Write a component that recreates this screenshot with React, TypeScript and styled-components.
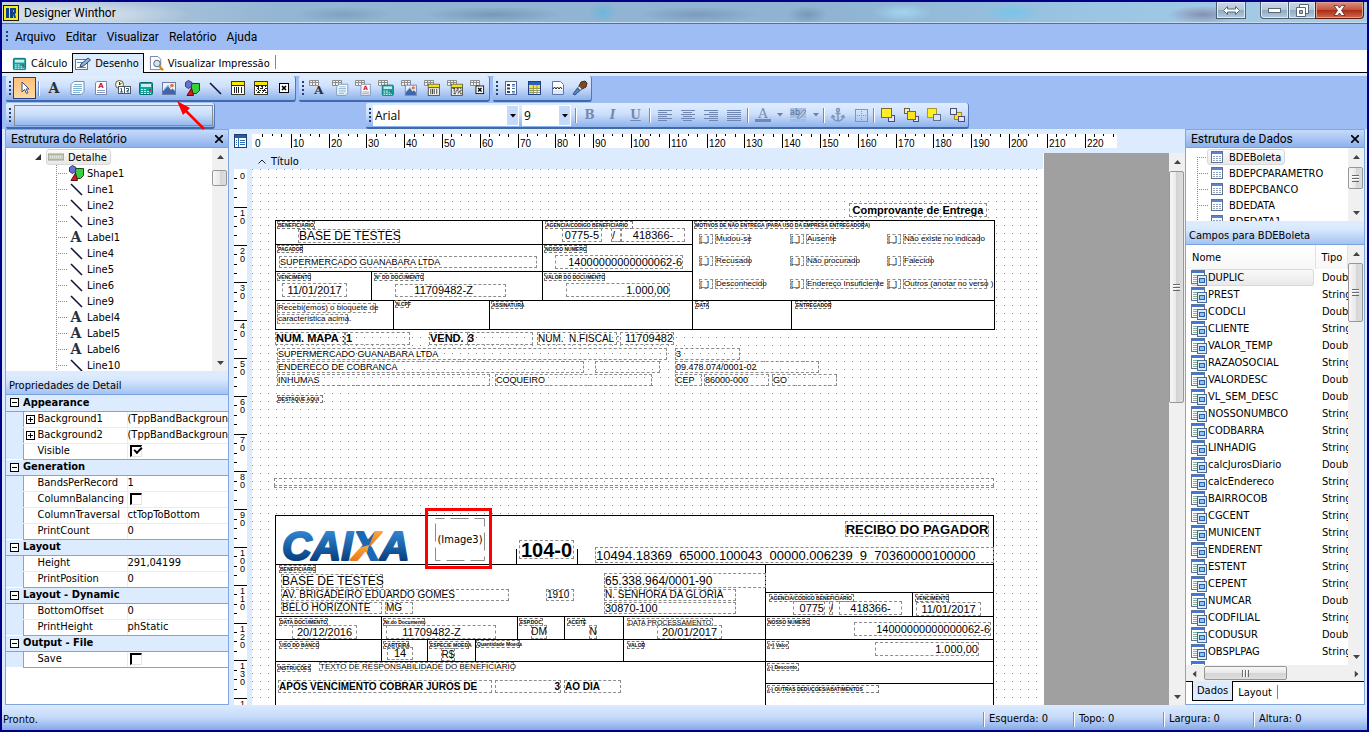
import React from 'react';
import styled, { createGlobalStyle, css } from 'styled-components';

const UI = '"DejaVu Sans Condensed", "Noto Sans", sans-serif';
const TITLE = 'Roboto, "Noto Sans", sans-serif';
const REPORT = '"Liberation Sans", Arial, sans-serif';

const GlobalStyle = createGlobalStyle`
  * { box-sizing: border-box; }
  body { margin: 0; font-family: ${UI}; font-size: 11px; color: #000; }
  button, select, input { font: inherit; color: inherit; margin: 0; padding: 0; }
  button { background: none; border: 0; }
  svg { display: block; flex: none; }
`;

/* ---------- window frame ---------- */

const Window = styled.div`
  height: 100vh;
  min-height: 480px;
  display: flex;
  flex-direction: column;
  overflow: hidden;
  border: 2px solid #000084;
  background: #dcebfe;
`;

const TitleBar = styled.header`
  flex: none;
  height: 22px;
  display: flex;
  align-items: center;
  gap: 5px;
  padding: 0 3px 0 1px;
  border-bottom: 1px solid #5d6f80;
  box-shadow: inset 0 -1px #c9dcec;
  background:
    radial-gradient(ellipse 120px 14px at 5% 60%, #dfe8f2, transparent),
    radial-gradient(ellipse 50px 8px at 25% 60%, #7fa2bf, transparent),
    radial-gradient(ellipse 70px 8px at 36% 60%, #7799b5, transparent),
    radial-gradient(ellipse 14px 10px at 44% 50%, #6fb4dc, transparent),
    radial-gradient(ellipse 60px 8px at 51% 60%, #7b9cba, transparent),
    radial-gradient(ellipse 30px 9px at 66% 50%, #a3d5ef, transparent),
    radial-gradient(ellipse 20px 9px at 59% 60%, #7699b6, transparent),
    radial-gradient(ellipse 30px 9px at 74% 50%, #78c4ea, transparent),
    radial-gradient(ellipse 36px 9px at 88% 60%, #8690b0, transparent),
    linear-gradient(90deg, #c3d2e2, #93b6d3 20%, #8fb3d1 60%, #9ac5e3 80%, #a9cde6);
  h1 { margin: 0; flex: 1; font: 12px ${TITLE}; }
`;

const WinButton = styled.button<{ $w: number; $close?: boolean }>`
  align-self: flex-start;
  width: ${p => p.$w}px;
  height: 17px;
  display: flex;
  align-items: center;
  justify-content: center;
  border: 1px solid ${p => (p.$close ? '#5b1a16' : '#4d5e6f')};
  border-top: 0;
  box-shadow: inset 0 0 0 1px ${p => (p.$close ? '#e0a090' : '#dfeaf4')};
  background: ${p => (p.$close
    ? 'linear-gradient(#d9917f, #c4513b 50%, #a92a18 50%, #cf6b45)'
    : 'linear-gradient(#c9d9e8, #b4c8da 50%, #8fa9c2 50%, #b3cce0)')};
`;

const WinGroup = styled.div`
  align-self: flex-start;
  display: flex;
  margin-left: 9px;
  button + button { margin-left: -1px; }
  button:first-child { border-bottom-left-radius: 4px; }
  button:last-child { border-bottom-right-radius: 4px; }
`;

const Grip = styled.span`
  flex: none;
  width: 3px;
  height: 15px;
  background: repeating-linear-gradient(#27416f 0 2px, transparent 2px 4px);
  clip-path: inset(0 1px 0 0);
`;

const MenuBar = styled.nav`
  flex: none;
  height: 26px;
  display: flex;
  align-items: center;
  gap: 10px;
  padding-left: 4px;
  background: #9ebdf5;
  border-bottom: 1px solid #b9b9b9;
  font: 12px ${TITLE};
  ${Grip} { margin-right: -4px; height: 12px; }
`;

const TabBar = styled.div`
  flex: none;
  height: 23px;
  display: flex;
  align-items: flex-end;
  padding-left: 5px;
  background: #fff;
  border-bottom: 1px solid #000;
`;

const ViewTab = styled.button<{ $active?: boolean }>`
  height: 19px;
  display: flex;
  align-items: center;
  gap: 4px;
  padding: 2px 5px 0;
  ${p => p.$active && css`
    height: 20px;
    margin-bottom: -1px;
    padding: 0 4px 0 2px;
    background: #dcebfe;
    border: 1px solid #000;
    border-bottom: 0;
  `}
`;

const TabEnd = styled.span`
  height: 14px;
  margin-bottom: 3px;
  border-left: 1px solid #8a8a7a;
`;

/* ---------- tool bars ---------- */

const ToolDock = styled.div`
  position: relative;
  flex: none;
  display: flex;
  flex-direction: column;
  gap: 1px;
  padding-left: 4px;
  border-top: 3px solid #dcebfe;
  background: #9ebdf5;
`;

const ToolRow = styled.div`
  display: flex;
  height: 26px;
  gap: 3px;
`;

const ToolBar = styled.div<{ $ml?: number }>`
  display: flex;
  align-items: center;
  height: 26px;
  margin-left: ${p => p.$ml || 0}px;
  padding-left: 3px;
  border-radius: 2px 3px 3px 2px;
  border-right: 1px solid #5079bd;
  border-bottom: 2px solid #4069ae;
  background: linear-gradient(#e0eefe, #cddffb 45%, #8db2ec);
`;

const ToolButton = styled.button<{ $active?: boolean; $w?: number }>`
  width: ${p => p.$w || 23}px;
  height: 22px;
  display: flex;
  align-items: center;
  justify-content: center;
  ${p => p.$active && css`
    border: 1px solid #26427c;
    background: linear-gradient(#fdc07a, #fdd9a0);
  `}
`;

const Sep = styled.span<{ $m?: number }>`
  flex: none;
  width: 2px;
  height: 15px;
  margin: 0 ${p => (p.$m === undefined ? 2 : p.$m)}px;
  background: linear-gradient(90deg, #6a8ccb 50%, #fff 50%);
`;

const EmptySlot = styled.div`
  width: 199px;
  height: 21px;
  margin: 0 1px 0 2px;
  border: 1px solid #8b8b8b;
`;

const SelectBox = styled.label<{ $w: number }>`
  position: relative;
  width: ${p => p.$w}px;
  height: 21px;
  margin-right: 3px;
  display: flex;
  border: 1px solid #fff;
  background: #fff;
  select {
    width: 100%;
    appearance: none;
    border: 0;
    outline: 0;
    padding: 0 0 0 1px;
    background: linear-gradient(90deg, transparent calc(100% - 11px), #c6dbfb 0);
    font: 12px "Open Sans", "Noto Sans", sans-serif;
  }
  svg { position: absolute; right: 2px; top: 8px; pointer-events: none; }
`;

const CalloutArrow = styled.svg`
  position: absolute;
  left: 174px;
  top: 25px;
  z-index: 3;
`;

/* ---------- docked panels ---------- */

const Main = styled.main`
  flex: 1;
  min-height: 0;
  display: grid;
  grid-template-columns: 224px minmax(0, 1fr) 180px;
  padding: 0 2px 0 3px;
`;

const Panel = styled.section`
  display: flex;
  flex-direction: column;
  min-width: 0;
  min-height: 0;
  overflow: hidden;
  border: 1px solid #7fa6e2;
`;

const PanelTitle = styled.header<{ $second?: boolean }>`
  flex: none;
  height: ${p => (p.$second ? 24 : 18)}px;
  display: flex;
  align-items: center;
  justify-content: space-between;
  padding: 0 5px 0 ${p => (p.$second ? 3 : 5)}px;
  ${p => p.$second && css`padding-top: 5px;`}
  border-bottom: 1px solid #7ba2e0;
  background: ${p => (p.$second
    ? 'linear-gradient(#dcebfe 20%, #d6e6fd 40%, #a3c3f3)'
    : 'linear-gradient(#c6dafb, #8db2ed)')};
  h2 { margin: 0; font: ${p => (p.$second ? `11px ${UI}` : `12px ${TITLE}`)}; white-space: nowrap; }
`;

const Pane = styled.div<{ $h?: number }>`
  ${p => (p.$h ? css`flex: 0 0 ${p.$h}px;` : css`flex: 1;`)}
  min-height: 0;
  display: flex;
  overflow: hidden;
  background: #fff;
`;

const TreeList = styled.ul<{ $pad: number }>`
  flex: 1;
  min-width: 0;
  margin: 0;
  padding: 1px 0 0 ${p => p.$pad}px;
  overflow: hidden;
  list-style: none;
`;

const TreeItem = styled.li`
  display: flex;
  align-items: center;
  height: 16px;
  white-space: nowrap;
`;

const Branch = styled.span<{ $first?: boolean }>`
  flex: none;
  width: 12px;
  height: 16px;
  background:
    repeating-linear-gradient(90deg, #8a8a8a 0 1px, transparent 1px 2px) 0 8px / 11px 1px no-repeat,
    repeating-linear-gradient(#8a8a8a 0 1px, transparent 1px 2px) 0 ${p => (p.$first ? 8 : 0)}px / 1px 16px no-repeat;
`;

const Node = styled.span<{ $selected?: boolean; $gap: number }>`
  display: flex;
  align-items: center;
  gap: ${p => p.$gap}px;
  height: 16px;
  ${p => p.$selected && css`
    margin-left: -2px;
    padding: 0 3px 0 1px;
    border: 1px solid #d9d9d9;
    border-radius: 3px;
    background: linear-gradient(#fafafa, #e8e8e8);
  `}
`;

const RootItem = styled(TreeItem)`
  padding-left: 29px;
  button { width: 13px; display: flex; }
`;

const ScrollTrack = styled.div<{ $row?: boolean }>`
  flex: none;
  display: flex;
  flex-direction: ${p => (p.$row ? 'row' : 'column')};
  ${p => (p.$row ? 'height: 16px;' : 'width: 16px;')}
  background: #f0f0f0;
`;

const ScrollArrow = styled.button<{ $dir: 'up' | 'down' | 'left' | 'right' }>`
  flex: none;
  width: 16px;
  height: 17px;
  display: flex;
  align-items: center;
  justify-content: center;
  svg { transform: rotate(${p => ({ up: 0, right: 90, down: 180, left: 270 })[p.$dir]}deg); }
`;

const ScrollThumb = styled.div<{ $row?: boolean; $size: number }>`
  flex: none;
  display: flex;
  align-items: center;
  justify-content: center;
  ${p => (p.$row
    ? css`width: ${p.$size}px; height: 14px; margin-top: 1px;`
    : css`height: ${p.$size}px; width: 15px;`)}
  border: 1px solid #979797;
  border-radius: 2px;
  background: linear-gradient(${p => (p.$row ? '' : '90deg, ')}#f7f7f7, #e8e8e8 50%, #d4d4d4 50%, #dedede);
  i {
    width: 7px;
    height: 7px;
    background: repeating-linear-gradient(${p => (p.$row ? '90deg, ' : '')}#6a6a6a 0 1px, #fff 1px 2px, transparent 2px 3px);
  }
`;

const Spacer = styled.span<{ $size?: number }>`
  ${p => (p.$size === undefined ? css`flex: 1;` : css`flex: 0 0 ${p.$size}px;`)}
`;

interface ScrollProps { row?: boolean; size: number; before: number; grip?: boolean }
const ArrowGlyph = () => (
  <svg width="7" height="4" viewBox="0 0 7 4"><path d="M0 4 3.500 0 7 4z" fill="#444" /></svg>
);
const ScrollBar = ({ row, size, before, grip }: ScrollProps) => (
  <ScrollTrack $row={row}>
    <ScrollArrow $dir={row ? 'left' : 'up'} aria-label={row ? 'Esquerda' : 'Acima'}><ArrowGlyph /></ScrollArrow>
    <Spacer $size={before} />
    <ScrollThumb $row={row} $size={size}>{grip && <i />}</ScrollThumb>
    <Spacer />
    <ScrollArrow $dir={row ? 'right' : 'down'} aria-label={row ? 'Direita' : 'Abaixo'}><ArrowGlyph /></ScrollArrow>
  </ScrollTrack>
);

/* ---------- property grid ---------- */

const PropTable = styled.table`
  width: 100%;
  table-layout: fixed;
  border-collapse: collapse;
  td, th { height: 16px; padding: 0; font-weight: normal; text-align: left; white-space: nowrap; overflow: hidden; line-height: 14px; }
`;

const GroupCell = styled.th`
  && { font-weight: bold; }
  background: #dcebfe;
  border-bottom: 1px solid #a0a0a0;
  span { display: flex; align-items: center; gap: 4px; padding-left: 4px; }
`;

const Gutter = styled.td`
  background: #dcebfe;
`;

const NameCell = styled.th<{ $last?: boolean; $expand?: boolean }>`
  border-left: 1px solid #a0a0a0;
  border-bottom: 1px solid ${p => (p.$last ? '#a0a0a0' : '#ececec')};
  span { display: flex; align-items: center; gap: 3px; padding-left: ${p => (p.$expand ? 2 : 14)}px; }
`;

const ValueCell = styled.td<{ $last?: boolean }>`
  border-left: 1px solid #ececec;
  border-bottom: 1px solid ${p => (p.$last ? '#a0a0a0' : '#ececec')};
`;

const Expander = styled.button<{ $open?: boolean }>`
  flex: none;
  width: 9px;
  height: 9px;
  border: 1px solid #000;
  background:
    linear-gradient(#000, #000) center / 5px 1px no-repeat,
    linear-gradient(#000, #000) center / ${p => (p.$open ? 0 : 1)}px 5px no-repeat,
    #fff;
`;

const Check = styled.input`
  && { display: block; margin-left: 2px; }
  position: relative;
  appearance: none;
  width: 12px;
  height: 12px;
  border: 2px solid #000;
  border-right: 1px solid #e4e4e4;
  border-bottom: 1px solid #e4e4e4;
  &:checked::after {
    content: '';
    position: absolute;
    left: 2px;
    top: 0;
    width: 6px;
    height: 3px;
    border-left: 2px solid #000;
    border-bottom: 2px solid #000;
    transform: rotate(-45deg);
  }
`;

/* ---------- design surface ---------- */

const Designer = styled.section`
  display: flex;
  flex-direction: column;
  min-width: 0;
  min-height: 0;
  overflow: hidden;
`;

const RulerRow = styled.div`
  flex: none;
  display: flex;
  gap: 5px;
  padding: 5px 0 5px 5px;
`;

const Surface = styled.div`
  flex: 1;
  min-height: 0;
  display: flex;
  overflow: hidden;
`;

const SideRuler = styled.div`
  flex: none;
  width: 23px;
  padding: 16px 0 0 5px;
  overflow: hidden;
`;

const Paper = styled.div`
  flex: none;
  width: 792px;
  display: flex;
  flex-direction: column;
  overflow: hidden;
  border-right: 1px solid #fff;
`;

const BandTitle = styled.div`
  flex: none;
  height: 16px;
  display: flex;
  align-items: center;
  gap: 5px;
  padding-left: 6px;
`;

const Backdrop = styled.div`
  flex: 1;
  min-width: 0;
  background: #a0a0a0;
`;

const Canvas = styled.div`
  position: relative;
  flex: 1;
  overflow: hidden;
  font-family: ${REPORT};
  background: conic-gradient(at 1px 1px, transparent 75%, #858585 0) 0 0 / 8px 8px, #fff;
`;

interface BoxProps { $x: number; $y: number; $w: number; $h: number }
const place = css<BoxProps>`
  position: absolute;
  left: ${p => p.$x}px;
  top: ${p => p.$y}px;
  width: ${p => p.$w}px;
  height: ${p => p.$h}px;
`;

const ShapeBox = styled.div<BoxProps>`
  ${place}
  border: 1px solid #000;
  background: #fff;
`;

const Rule = styled.div<BoxProps>`
  ${place}
  background: #000;
`;

const FieldBox = styled.div<BoxProps & { $size: number; $bold?: boolean; $align?: string }>`
  ${place}
  display: flex;
  align-items: center;
  justify-content: ${p => ({ r: 'flex-end', c: 'center' })[p.$align || ''] || 'flex-start'};
  border: 1px dashed #8c8c8c;
  font-size: ${p => p.$size}px;
  font-weight: ${p => (p.$bold ? 'bold' : 'normal')};
  line-height: 1;
  white-space: pre;
`;

const Caption = styled(FieldBox)`
  border-color: #777;
`;

const Highlight = styled.div<BoxProps>`
  ${place}
  border: 3px solid #f00;
`;

const ImageSlot = styled.div<BoxProps>`
  ${place}
  display: grid;
  place-items: center;
  font-family: ${UI};
  font-size: 11px;
  > * { grid-area: 1 / 1; }
`;

const Logo = styled.svg<BoxProps>`
  ${place}
  overflow: visible;
`;

type Quad = [number, number, number, number];
const shapes: Quad[] = [[23, 51, 720, 110], [23, 346, 719, 400]];

const rules: Quad[] = [
  [23, 75, 418, 1], [23, 102, 418, 1], [23, 131, 720, 1],
  [290, 51, 1, 81], [440, 51, 1, 110], [119, 102, 1, 30],
  [141, 131, 1, 30], [237, 131, 1, 30], [539, 131, 1, 30],
  [23, 395, 719, 1], [23, 447, 719, 1], [23, 470, 719, 1], [23, 492, 719, 1],
  [513, 423, 229, 1], [513, 514, 229, 1],
  [513, 395, 1, 300], [660, 423, 1, 25], [371, 447, 1, 46], [129, 447, 1, 46],
  [265, 447, 1, 24], [312, 447, 1, 24], [175, 470, 1, 23], [223, 470, 1, 23],
  [264, 380, 1, 15], [325, 380, 1, 15],
];

type Field = [x: number, y: number, w: number, h: number, text: string, size?: number, align?: '' | 'r' | 'c', bold?: boolean];

const captions: [number, number, number, string][] = [
  [25, 52, 38, 'BENEFICIARIO'], [25, 76, 26, 'PAGADOR'], [25, 104, 34, 'VENCIMENTO'],
  [122, 104, 50, 'N° DO DOCUMENTO'], [143, 131, 14, 'N.CPF'], [239, 132, 32, 'ASSINATURA'],
  [293, 52, 88, 'AGENCIA/CODIGO BENEFICIARIO'], [292, 76, 43, 'NOSSO NUMERO'], [292, 104, 61, 'VALOR DO DOCUMENTO'],
  [442, 52, 170, 'MOTIVOS DE NÃO ENTREGA (PARA USO DA EMPRESA ENTREGADORA)'],
  [443, 132, 14, 'DATA'], [543, 132, 36, 'ENTREGADOR'], [25, 226, 46, 'DESTAQUE AQUI'],
  [27, 396, 37, 'BENEFICIARIO'], [517, 425, 85, 'AGENCIA/CODIGO BENEFICIARIO'], [663, 425, 34, 'VENCIMENTO'],
  [27, 449, 49, 'DATA DOCUMENTO'], [131, 449, 42, 'Nr.do Documento'], [267, 449, 24, 'ESP.DOC'],
  [315, 449, 18, 'ACEITE'], [515, 449, 43, 'NOSSO NUMERO'], [27, 472, 40, 'USO DO BANCO'],
  [131, 472, 26, 'CARTEIRA'], [177, 472, 40, 'ESPECIE MOEDA'], [224, 471, 44, 'Quantidade Moeda'],
  [375, 472, 17, 'VALOR'], [515, 472, 22, '(=) Valor'], [515, 494, 32, '(-) Desconto'],
  [515, 516, 112, '(-) OUTRAS DEDUÇOES/ABATIMENTOS'], [25, 495, 34, 'INSTRUÇÕES'],
];

const fields: Field[] = [
  [597, 34, 138, 14, 'Comprovante de Entrega', 11, 'c', true],
  [46, 60, 102, 14, 'BASE DE TESTES', 12],
  [27, 87, 258, 12, 'SUPERMERCADO GUANABARA LTDA', 9],
  [30, 114, 65, 14, '11/01/2017', 11, 'c'],
  [143, 115, 111, 13, '      11709482-Z', 11],
  [25, 134, 99, 10, 'Recebi(emos) o bloquete de', 8],
  [25, 145, 71, 10, 'característica acima.', 8],
  [310, 59, 40, 14, '0775-5', 11, 'c'],
  [359, 59, 10, 14, '/', 11],
  [369, 59, 64, 14, '418366-', 11, 'c'],
  [303, 86, 128, 14, '14000000000000062-6', 11, 'r'],
  [314, 114, 104, 14, '1.000,00', 11, 'r'],
  [447, 65, 14, 10, '[_]', 8], [463, 65, 35, 10, 'Mudou-se', 8],
  [447, 87, 14, 10, '[_]', 8], [463, 87, 35, 10, 'Recusado', 8],
  [447, 110, 14, 10, '[_]', 8], [463, 110, 49, 10, 'Desconhecido', 8],
  [538, 65, 14, 10, '[_]', 8], [554, 65, 28, 10, 'Ausente', 8],
  [538, 87, 14, 10, '[_]', 8], [554, 87, 51, 10, 'Não procurado', 8],
  [538, 110, 14, 10, '[_]', 8], [554, 110, 72, 10, 'Endereço Insuficiente', 8],
  [635, 65, 14, 10, '[_]', 8], [651, 65, 77, 10, 'Não existe no indicado', 8],
  [635, 87, 14, 10, '[_]', 8], [651, 87, 29, 10, 'Falecido', 8],
  [635, 110, 14, 10, '[_]', 8], [651, 110, 84, 10, 'Outros (anotar no verso )', 8],
  [23, 163, 70, 13, 'NUM. MAPA :', 11, '', true], [93, 163, 65, 13, '1', 11, '', true],
  [177, 163, 39, 13, 'VEND. :', 11, '', true], [215, 163, 66, 13, '3', 11, '', true],
  [285, 163, 80, 13, 'NUM.  N.FISCAL :', 10], [368, 163, 54, 13, '11709482', 11, 'r'],
  [25, 179, 390, 12, 'SUPERMERCADO GUANABARA LTDA', 9], [423, 179, 65, 12, '3', 9],
  [25, 192, 307, 12, 'ENDERECO DE COBRANCA', 9], [343, 192, 65, 12, '', 9], [423, 192, 144, 12, '09.478.074/0001-02', 9],
  [25, 205, 213, 12, 'INHUMAS', 9], [243, 205, 157, 12, 'COQUEIRO', 9],
  [423, 205, 27, 12, 'CEP', 9], [452, 205, 65, 12, '86000-000', 9], [520, 205, 65, 12, 'GO', 9],
  [22, 309, 720, 8, '', 9], [22, 316, 720, 3, '', 9],
  [593, 352, 144, 16, 'RECIBO DO PAGADOR', 13, 'c', true],
  [267, 371, 55, 19, '104-0', 20, 'c', true],
  [343, 378, 399, 16, '10494.18369  65000.100043  00000.006239  9  70360000100000', 13],
  [29, 405, 102, 14, 'BASE DE TESTES', 12],
  [29, 420, 228, 12, 'AV. BRIGADEIRO EDUARDO GOMES', 10], [294, 420, 28, 12, '1910', 10],
  [29, 433, 101, 12, 'BELO HORIZONTE', 10], [133, 433, 28, 12, 'MG', 10],
  [352, 404, 162, 15, '65.338.964/0001-90', 12],
  [352, 420, 132, 12, 'N. SENHORA DA GLORIA', 10], [352, 433, 132, 12, '30870-100', 11],
  [541, 432, 32, 14, '0775', 11, 'r'], [577, 432, 4, 14, '/', 11], [587, 432, 63, 14, '418366-', 11, 'c'],
  [664, 433, 65, 14, '11/01/2017', 11, 'c'],
  [40, 456, 65, 14, '20/12/2016', 11, 'c'], [134, 456, 110, 14, '     11709482-Z', 11],
  [279, 456, 16, 14, 'DM', 10, 'c'], [337, 456, 8, 14, 'N', 10, 'c'],
  [375, 449, 86, 8, 'DATA PROCESSAMENTO', 7],
  [405, 456, 65, 14, '20/01/2017', 11, 'c'],
  [602, 453, 137, 14, '14000000000000062-6', 11, 'r'],
  [135, 478, 26, 13, '14', 11, 'c'], [189, 479, 14, 13, 'R$', 10, 'c'],
  [623, 473, 104, 14, '1.000,00', 11, 'r'],
  [67, 493, 195, 9, 'TEXTO DE RESPONSABILIDADE DO BENEFICIARIO', 8],
  [26, 511, 214, 13, 'APÓS VENCIMENTO COBRAR JUROS DE', 10, '', true],
  [243, 511, 66, 13, '3', 10, 'r', true], [312, 511, 57, 13, 'AO DIA', 10, '', true],
];

const MM10 = 37.8;
const marks = (n: number) => Array.from({ length: n }, (_, i) => i);

const TopRuler = () => (
  <svg width="865" height="14" shapeRendering="crispEdges">
    <rect width="865" height="14" fill="#fff" />
    {marks(92).map(i => {
      const x = Math.round(i * MM10 / 4) + 1;
      const long = i % 4 === 0;
      return i > 0 && <rect key={i} x={x} y={0} width="1" height={long ? 14 : i % 2 ? 3 : 2} fill="#000" />;
    })}
    <rect x="327" width="1" height="13" />
    {marks(23).map(i => (
      <text key={i} x={Math.round(i * MM10) + 3} y="13" fontFamily={REPORT} fontSize="10">{i * 10}</text>
    ))}
  </svg>
);

const LeftRuler = () => (
  <svg width="13" height="536" shapeRendering="crispEdges">
    <rect width="13" height="536" fill="#fff" />
    {marks(57).map(i => i > 0 && (
      <rect key={i} x="0" y={Math.round(i * MM10 / 4)} width={i % 4 ? 3 : 13} height="1" />
    ))}
    {marks(15).map(i => String(i * 10).split('').map((d, k) => (
      <text key={`${i}-${k}`} x="6" y={Math.round(i * MM10) + (i ? 9 : 10) + k * 8} fontFamily={REPORT} fontSize="9">{d}</text>
    )))}
  </svg>
);

/* ---------- data list ---------- */

const FieldTable = styled.table`
  width: 100%;
  table-layout: fixed;
  border-collapse: collapse;
  th { height: 24px; padding: 0 6px; text-align: left; font-weight: normal; border-right: 1px solid #e2e2e2; background: linear-gradient(#fff, #f7f7f8); }
  td { height: 17px; padding: 0 0 0 7px; white-space: nowrap; overflow: hidden; }
  td:first-child { padding: 0 1px 0 5px; }
`;

const NameChip = styled.span<{ $selected?: boolean }>`
  display: flex;
  align-items: center;
  height: 17px;
  gap: 1px;
  border-radius: 3px;
  ${p => p.$selected && css`
    box-shadow: inset 0 0 0 1px #d9d9d9;
    background: linear-gradient(#fafafa, #e8e8e8);
  `}
`;

const ListArea = styled.div`
  flex: 1;
  min-width: 0;
  overflow: hidden;
`;

const BottomTabs = styled.div`
  flex: none;
  height: 23px;
  display: flex;
  align-items: flex-start;
  padding-left: 6px;
  border-top: 1px solid #000;
  background: #fff;
  ${TabEnd} { margin-top: 3px; }
`;

const BottomTab = styled.button<{ $active?: boolean }>`
  height: 20px;
  padding: 0 5px;
  ${p => p.$active && css`
    margin-top: -1px;
    padding: 0 4px;
    border: 1px solid #000;
    border-top: 0;
    background: #dcebfe;
  `}
`;

const StatusBar = styled.footer`
  flex: none;
  height: 25px;
  display: flex;
  align-items: center;
  padding: 4px 0 0 1px;
  background: linear-gradient(#dcebfe, #c4d9fa 50%, #84a9e6);
`;

const StatusCell = styled.span<{ $w: number }>`
  width: ${p => p.$w}px;
  height: 15px;
  padding-left: 5px;
  border-left: 1px solid #6f93d6;
  box-shadow: inset 1px 0 #fff;
`;

/* ---------- icons (16 x 16) ---------- */

type IconName = 'cursor' | 'label' | 'memo' | 'rich' | 'sysvar' | 'calc' | 'image' | 'shape' | 'line'
  | 'bar' | 'bar2' | 'check' | 'tree' | 'data' | 'page' | 'brush' | 'pen' | 'preview' | 'band' | 'table'
  | 'field' | 'front' | 'back' | 'forward' | 'backward' | 'anchor' | 'border' | 'fontcolor' | 'hilite';

const glyphs: Record<IconName, React.ReactNode> = {
  cursor: <path d="M5 2v10l2.500-2.500 2 4 1.500-.8-2-3.700H12z" fill="#fff" stroke="#39507a" />,
  label: <text x="8" y="13" textAnchor="middle" fontFamily="DejaVu Serif, serif" fontWeight="bold" fontSize="14" fill="#2e3038">A</text>,
  memo: <><path d="M5 1.500h10v10l-3 3H2v-10z" fill="#fff" stroke="#6c8fb5" /><path d="M5 4.500h8M4 6.500h9M4 8.500h9M4 10.500h9M4 12.500h7" stroke="#7fb3d8" /></>,
  rich: <><path d="M5 1.500h9.500v13h-11V3z" fill="#fff" stroke="#7c86ae" /><text x="9" y="8" textAnchor="middle" fontFamily="DejaVu Sans" fontWeight="bold" fontSize="7" fill="#d01010">A</text><path d="M5 10.500h8M5 12.500h8" stroke="#8a9bc4" /></>,
  sysvar: <><circle cx="4.500" cy="4.500" r="4" fill="#fff8d0" stroke="#555" /><path d="M4.500 2v3l2-2" fill="none" stroke="#333" /><rect x="3.500" y="6.500" width="6" height="7" fill="#fff" stroke="#555" /><rect x="9.500" y="6.500" width="6" height="7" fill="#fff" stroke="#555" /><path d="M5.500 8.500h1v3.500M5 12h3M11 8.500h2.500v2H12V12h2" fill="none" stroke="#1c5f95" /></>,
  calc: <><rect x="1.500" y="2.500" width="13" height="12" rx="1" fill="#12a5a0" stroke="#0a6b6b" /><rect x="3" y="4" width="10" height="3" fill="#c7f1ee" /><path d="M3 9.500h2M6 9.500h2M3 11.500h2M6 11.500h2M9 11.500h2M3 13.500h2M6 13.500h2M9 13.500h2M12 13.500h1" stroke="#d8ffff" /><rect x="11" y="9" width="2" height="2" fill="#e02020" /></>,
  image: <><rect x="1.500" y="2.500" width="13" height="12" fill="#eaf2fc" stroke="#6a7aa8" /><circle cx="11" cy="5.500" r="1.800" fill="#ef6d3a" /><path d="M2 14v-3l5-5 3 4 1.500-1.500L14 11v3z" fill="#3f66ac" /><path d="m3 9 4-4 3 3" fill="none" stroke="#a9bedf" /></>,
  shape: <><path d="M7.500 3.500h8v7l-3 3h-5z" fill="#35d13a" stroke="#1c4a1e" /><path d="m4.500.500 3.500 2-.5 4-3 2-3-2V2.500z" fill="#6b6fd0" stroke="#35357a" /><path d="m7.500 8 2 7.500H3z" fill="#e0161c" stroke="#5c1010" /></>,
  line: <path d="m3 3 11 11" stroke="#15153c" strokeWidth="1.600" />,
  bar: <><rect x="1.500" y="1.500" width="13" height="13" fill="#fff" stroke="#3a3a2a" /><rect x="2" y="2" width="12" height="3" fill="#f6e900" /><path d="M2 5.500h12M4.500 7v6M6.500 7v6M8.500 7v6M11.500 7v6" stroke="#222" /></>,
  bar2: <><rect x="1.500" y="1.500" width="13" height="13" fill="#fff" stroke="#3a3a2a" /><rect x="2" y="2" width="12" height="3" fill="#f6e900" /><path d="M2 5.500h12M3 6.500h3m2 0h2m2 0h1M4 8.500h2m1 0h3m2 0h2M3 10.500h1m2 0h2m1 0h4M4 12.500h3m2 0h1m2 0h2M5 7.500h1m3 0h1M5 11.500h1m4 0h1M5 9.500h1m5 0h1" stroke="#222" /></>,
  check: <><rect x="3.500" y="3.500" width="9" height="9" fill="#fff" stroke="#000" /><path d="m6 6 4 4m0-4-4 4" stroke="#000" strokeWidth="1.600" /></>,
  tree: <><rect x="2.500" y="1.500" width="11" height="13" fill="#fff" stroke="#48659c" /><path d="M4 4h3v2H4zM4 7.500h3v2H4zM4 11h3v2H4z" fill="#26457c" /><path d="M9 4.500h3M9 6h3M9 8.500h3M9 11.500h3M9 13h3" stroke="#4a6da8" /></>,
  data: <><rect x="2.500" y="1.500" width="12" height="13" fill="#fff" stroke="#1d3f86" /><rect x="3" y="2" width="11" height="3" fill="#2a62b8" /><rect x="3" y="5" width="4" height="9" fill="#f6e52a" /><rect x="7" y="5" width="7" height="3" fill="#f6e52a" /><path d="M3 8.500h11M3 10.500h11M3 12.500h11M7.500 5v9M11 5v9" stroke="#9a9a60" /></>,
  page: <><path d="M3.500 1.500h8l3 3v10h-11z" fill="#fff" stroke="#5c76b0" /><path d="m4 9 1.500-2L7 9l1.500-2L10 9l1.500-2L13 9" fill="none" stroke="#222" /><path d="M4 10h10v4H4z" fill="#dfe9f8" /></>,
  brush: <><path d="M9 2l4-1 2 2-1 4-4 2-3-3z" fill="#7b4a2b" stroke="#4c2a16" /><path d="m7 6 3 3-2 1.500L5.500 8z" fill="#e8ecee" stroke="#667" /><path d="m5.500 8 2.500 2.500L3 15l-2-1z" fill="#4f86c2" stroke="#2d5587" /></>,
  pen: <><rect x=".500" y="3.500" width="12" height="10" fill="#fff" stroke="#5876ae" /><path d="M2 6.500h6M2 11.500h9" stroke="#5b8cd0" /><path d="m5 11 1-3 7-6 2.500 2-7 6z" fill="#86b4e4" stroke="#32455e" /></>,
  preview: <><path d="M1.500.500h8l3 3v11h-11z" fill="#fff" stroke="#6d7fa8" /><circle cx="8.500" cy="8" r="3.500" fill="#cfe4f4" stroke="#555f6a" /><path d="m11 11 4 4" stroke="#d48a2c" strokeWidth="2.500" /></>,
  band: <><rect x="0" y="5" width="16" height="6" fill="#c9cdbd" stroke="#85897a" strokeWidth=".8" /><path d="M2 8h12" stroke="#fff" strokeDasharray="1 1" /></>,
  table: <><rect x="2.500" y="2.500" width="11" height="11" fill="#fff" stroke="#5f7294" /><rect x="3" y="3" width="10" height="2" fill="#5a84dc" /><path d="M4 7.500h8M4 9.500h8M4 11.500h8" stroke="#8fa3c0" strokeDasharray="2 1" /></>,
  field: <><rect x=".500" y=".500" width="13" height="13" fill="#fff" stroke="#5c7296" /><rect x="1" y="1" width="12" height="2" fill="#3f78d6" /><path d="M2 5.500h4M2 7.500h4M2 9.500h4M2 11.500h4" stroke="#86b09a" /><rect x="6.500" y="5.500" width="9" height="10" fill="#dcebfb" stroke="#49699a" /><rect x="8.500" y="8.500" width="5" height="4" fill="#8fc1f2" stroke="#2b5ea8" /></>,
  front: <><rect x="8.500" y="8.500" width="6" height="6" fill="#dce6f5" stroke="#4b4b7c" /><rect x="1.500" y="1.500" width="10" height="9" fill="#ffee20" stroke="#7d6a1a" /></>,
  back: <><rect x="1.500" y="1.500" width="5" height="5" fill="#f3ecc0" stroke="#6b5c3a" /><rect x="10.500" y="9.500" width="5" height="5" fill="#dce6f5" stroke="#4b4b7c" /><rect x="4.500" y="4.500" width="8" height="8" fill="#ffe31c" stroke="#7d6a1a" /></>,
  forward: <><rect x="1.500" y="1.500" width="9" height="9" fill="#ffee20" stroke="#a89a30" /><rect x="7.500" y="7.500" width="7" height="6" fill="#d7e4f5" stroke="#5f6f94" /></>,
  backward: <><rect x="5.500" y="5.500" width="7" height="7" fill="#ffe31c" stroke="#a08a20" /><rect x="1.500" y="1.500" width="6" height="6" fill="#e6eefa" stroke="#4c4c74" /><rect x="9.500" y="9.500" width="6" height="5" fill="#dce6f5" stroke="#4c4c74" /></>,
  anchor: <g fill="none" stroke="#7f95bd" strokeWidth="1.500"><circle cx="8" cy="3" r="1.500" /><path d="M8 4.500V14M5.500 6.500h5M2.500 9c.5 3 2.500 5 5.500 5s5-2 5.500-5M1.500 11l1-2.500L5 10m6 0 2.500-1.500 1 2.500" /></g>,
  border: <><rect x="2.500" y="2.500" width="12" height="12" fill="none" stroke="#7f95bd" /><path d="M8.500 4v9M4 8.500h9" stroke="#7f95bd" strokeDasharray="1 1" /></>,
  fontcolor: <><text x="8" y="11" textAnchor="middle" fontFamily="DejaVu Serif, serif" fontSize="13" fill="#7489b0">A</text><rect x="0" y="12" width="16" height="3" fill="#7489b0" /></>,
  hilite: <><rect x="0" y="1" width="16" height="10" fill="#a9bddf" /><rect x="0" y="12" width="16" height="3" fill="#9fbcec" /><text x="0" y="8" fontFamily="DejaVu Sans" fontSize="8" fill="#5a6f96">ab</text><path d="m7 11 7-8 2 1-6 7z" fill="#c3d2ea" stroke="#7489b0" /></>,
};

const Icon = ({ name, size = 16 }: { name: IconName; size?: number }) => (
  <svg width={size} height={size} viewBox="0 0 16 16">{glyphs[name]}</svg>
);

/* data-aware component: a small table behind the plain component's icon */
const DbIcon = ({ name }: { name: IconName }) => (
  <svg width="18" height="18" viewBox="0 0 18 18">
    <path d="M1.500 1.500h9v5h-9zM1.500 3.500h9M4.500 1.500v5M7.500 1.500v5" fill="#f4f4ee" stroke="#8d8d8d" />
    <g transform="translate(4 4) scale(.85)">{glyphs[name]}</g>
  </svg>
);

const Close = () => (
  <svg width="8" height="8" viewBox="0 0 8 8"><path d="m0 0 8 8m0-8-8 8" stroke="#000" strokeWidth="1.700" /></svg>
);
const Drop = ({ fill = '#000' }: { fill?: string }) => (
  <svg width="6" height="4" viewBox="0 0 6 4"><path d="M0 0h6L3 3.500z" fill={fill} /></svg>
);

const Lines = ({ kind }: { kind: 'l' | 'c' | 'r' | 'j' }) => (
  <svg width="14" height="13" viewBox="0 0 14 13" shapeRendering="crispEdges">
    {[0, 1, 2, 3, 4, 5].map(i => {
      const w = kind === 'j' || i % 2 === 0 ? 14 : 9;
      const x = kind === 'c' ? Math.floor((14 - w) / 2) : kind === 'r' ? 14 - w : 0;
      return <rect key={i} x={x} y={1 + i * 2} width={w} height="1" fill="#6f86b0" />;
    })}
  </svg>
);

const Letter = styled.span<{ $kind: 'b' | 'i' | 'u' }>`
  font: bold 12px "DejaVu Serif", serif;
  color: #7389b2;
  font-style: ${p => (p.$kind === 'i' ? 'italic' : 'normal')};
  text-decoration: ${p => (p.$kind === 'u' ? 'underline' : 'none')};
`;

/* ---------- content ---------- */

const treeNodes = ['Shape1', 'Line1', 'Line2', 'Line3', 'Label1', 'Line4', 'Line5', 'Line6', 'Line9', 'Label4', 'Label5', 'Label6', 'Line10'];
const nodeIcon = (n: string): IconName => (n.startsWith('Shape') ? 'shape' : n.startsWith('Line') ? 'line' : 'label');

type Prop = [name: string, value: string | boolean, expand?: boolean];
const groups: [string, Prop[]][] = [
  ['Appearance', [['Background1', '(TppBandBackground)', true], ['Background2', '(TppBandBackground)', true], ['Visible', true]]],
  ['Generation', [['BandsPerRecord', '1'], ['ColumnBalancing', false], ['ColumnTraversal', 'ctTopToBottom'], ['PrintCount', '0']]],
  ['Layout', [['Height', '291,04199'], ['PrintPosition', '0']]],
  ['Layout - Dynamic', [['BottomOffset', '0'], ['PrintHeight', 'phStatic']]],
  ['Output - File', [['Save', false]]],
];

const dataSets = ['BDEBoleta', 'BDEPCPARAMETRO', 'BDEPCBANCO', 'BDEDATA', 'BDEDATA1'];
const dbFields: [string, string][] = [
  ['DUPLIC', 'Double'], ['PREST', 'String'], ['CODCLI', 'Double'], ['CLIENTE', 'String'], ['VALOR_TEMP', 'Double'],
  ['RAZAOSOCIAL', 'String'], ['VALORDESC', 'Double'], ['VL_SEM_DESC', 'Double'], ['NOSSONUMBCO', 'String'],
  ['CODBARRA', 'String'], ['LINHADIG', 'String'], ['calcJurosDiario', 'Double'], ['calcEndereco', 'String'],
  ['BAIRROCOB', 'String'], ['CGCENT', 'String'], ['MUNICENT', 'String'], ['ENDERENT', 'String'], ['ESTENT', 'String'],
  ['CEPENT', 'String'], ['NUMCAR', 'Double'], ['CODFILIAL', 'String'], ['CODUSUR', 'Double'], ['OBSPLPAG', 'String'], ['', ''],
];

const tools: IconName[] = ['label', 'memo', 'rich', 'sysvar', 'calc', 'image', 'shape', 'line', 'bar', 'bar2', 'check'];
const dbTools: IconName[] = ['label', 'memo', 'rich', 'calc', 'image', 'bar', 'bar2', 'check'];
const viewTools: IconName[] = ['tree', 'data', 'page', 'brush'];

const Report = () => (
  <Canvas>
    {shapes.map(([x, y, w, h]) => <ShapeBox key={y} $x={x} $y={y} $w={w} $h={h} />)}
    {rules.map(([x, y, w, h], i) => <Rule key={i} $x={x} $y={y} $w={w} $h={h} />)}
    {captions.map(([x, y, w, text], i) => (
      <Caption key={i} $x={x} $y={y} $w={w} $h={8} $size={5} $bold>{text}</Caption>
    ))}
    {fields.map(([x, y, w, h, text, size = 11, align, bold], i) => (
      <FieldBox key={i} $x={x} $y={y} $w={w} $h={h} $size={size} $align={align} $bold={bold}>{text}</FieldBox>
    ))}
    <Logo $x={30} $y={362} $w={130} $h={31} viewBox="0 0 130 31">
      <defs>
        <linearGradient id="caixaBlue" x1="0" y1="0" x2="0" y2="31" gradientUnits="userSpaceOnUse">
          <stop offset="0" stopColor="#2f86d0" /><stop offset="1" stopColor="#063c7c" />
        </linearGradient>
        <linearGradient id="caixaOrange" x1="0" y1="0" x2="0" y2="1">
          <stop offset="0" stopColor="#f9a83a" /><stop offset="1" stopColor="#e9731c" />
        </linearGradient>
        <pattern id="caixaCross" width="160" height="60" patternUnits="userSpaceOnUse">
          <rect width="160" height="60" fill="#1a67b4" />
          <path d="M87 15 93 0h30v8L92 16z" fill="url(#caixaOrange)" />
          <path d="m87 14-4 17H55v-8z" fill="url(#caixaOrange)" />
        </pattern>
      </defs>
      <text y="29" fontFamily={REPORT} fontSize="41" fontWeight="bold" fontStyle="italic" fill="url(#caixaBlue)" stroke="url(#caixaBlue)" strokeWidth="2" strokeLinejoin="round">
        CAI<tspan fill="url(#caixaCross)" stroke="url(#caixaCross)">X</tspan>A
      </text>
    </Logo>
    <ImageSlot $x={183} $y={349} $w={50} $h={43}>
      <svg width="50" height="43"><rect x=".5" y=".5" width="49" height="42" fill="#fff" stroke="#8c8c8c" strokeDasharray="18 6" strokeDashoffset="9" /></svg>
      <span>(Image3)</span>
    </ImageSlot>
    <Highlight $x={173} $y={339} $w={67} $h={61} />
  </Canvas>
);

const App = () => (
  <Window>
    <GlobalStyle />
    <TitleBar>
      <svg width="16" height="16" viewBox="0 0 16 16">
        <rect width="16" height="16" fill="#1a1a10" /><rect x="1" y="1" width="14" height="14" fill="#f5ee1c" />
        <path d="M3 3h3v10H3zM7 3h6v5l-1 1 1 4h-2l-1-4v4H7z" fill="#10408c" />
        <path d="M10 5h1v2h-1z" fill="#5fd0e8" />
      </svg>
      <h1>Designer Winthor</h1>
      <WinButton $w={30} aria-label="Mover">
        <svg width="17" height="9" viewBox="0 0 17 9"><path d="m.500 4.500 4-4v2.500h8V.500l4 4-4 4V6h-8v2.500z" fill="#fff" stroke="#5a6876" /></svg>
      </WinButton>
      <WinGroup>
        <WinButton $w={29} aria-label="Minimizar">
          <svg width="13" height="5"><rect x=".5" y=".5" width="12" height="4" fill="#fff" stroke="#5a6876" /></svg>
        </WinButton>
        <WinButton $w={28} aria-label="Restaurar">
          <svg width="13" height="13"><path d="M3.500.500h9v9h-9z" fill="#fff" stroke="#5a6876" /><path d="M.500 3.500h9v9h-9z" fill="#fff" stroke="#5a6876" /><path d="M3.500 6.500h3v3h-3z" fill="#9db5cc" stroke="#5a6876" /></svg>
        </WinButton>
        <WinButton $w={49} $close aria-label="Fechar">
          <svg width="13" height="11" viewBox="0 0 13 11"><path d="M1 .500h3.500l2 2.500 2-2.500H12L8.500 5.500 12 10.500H8.500l-2-2.500-2 2.500H1l3.500-5z" fill="#fff" stroke="#5b2a28" strokeWidth=".8" /></svg>
        </WinButton>
      </WinGroup>
    </TitleBar>

    <MenuBar>
      <Grip />
      {['Arquivo', 'Editar', 'Visualizar', 'Relatório', 'Ajuda'].map(m => <button key={m}>{m}</button>)}
    </MenuBar>

    <TabBar>
      <ViewTab><Icon name="calc" size={15} />Cálculo</ViewTab>
      <ViewTab $active><Icon name="pen" />Desenho</ViewTab>
      <ViewTab><Icon name="preview" size={15} />Visualizar Impressão</ViewTab>
      <TabEnd />
    </TabBar>

    <ToolDock>
      <ToolRow>
        <ToolBar>
          <Grip />
          <Spacer $size={1} />
          <ToolButton $active aria-label="Selecionar"><Icon name="cursor" /></ToolButton>
          <Sep />
          {tools.map(t => <ToolButton key={t} aria-label={t}><Icon name={t} /></ToolButton>)}
        </ToolBar>
        <ToolBar>
          <Grip />
          {dbTools.map(t => <ToolButton key={t} aria-label={`db ${t}`}><DbIcon name={t} /></ToolButton>)}
        </ToolBar>
        <ToolBar>
          <Grip />
          {viewTools.map(t => <ToolButton key={t} aria-label={t}><Icon name={t} /></ToolButton>)}
        </ToolBar>
      </ToolRow>
      <ToolRow>
        <ToolBar><Grip /><EmptySlot /></ToolBar>
        <ToolBar $ml={148}>
          <Grip />
          <Spacer $size={1} />
          <SelectBox $w={146}>
            <select aria-label="Fonte" defaultValue="Arial"><option>Arial</option></select><Drop />
          </SelectBox>
          <SelectBox $w={49}>
            <select aria-label="Tamanho" defaultValue="9"><option>9</option></select><Drop />
          </SelectBox>
          <Sep $m={1} />
          {(['b', 'i', 'u'] as const).map(k => (
            <ToolButton key={k}><Letter $kind={k}>{k.toUpperCase()}</Letter></ToolButton>
          ))}
          <Sep />
          {(['l', 'c', 'r', 'j'] as const).map(k => (
            <ToolButton key={k} aria-label={`align ${k}`}><Lines kind={k} /></ToolButton>
          ))}
          <Sep />
          <ToolButton aria-label="Cor da fonte"><Icon name="fontcolor" /></ToolButton>
          <ToolButton $w={12} aria-label="Mais cores"><Drop fill="#6f7f9f" /></ToolButton>
          <ToolButton aria-label="Realce"><Icon name="hilite" /></ToolButton>
          <ToolButton $w={13} aria-label="Mais realces"><Drop fill="#6f7f9f" /></ToolButton>
          <Sep $m={1} />
          <ToolButton aria-label="Ancorar"><Icon name="anchor" /></ToolButton>
          <ToolButton aria-label="Borda"><Icon name="border" /></ToolButton>
          <Sep $m={1} />
          {(['front', 'back', 'forward', 'backward'] as const).map(k => (
            <ToolButton key={k} aria-label={k}><Icon name={k} /></ToolButton>
          ))}
        </ToolBar>
      </ToolRow>
      <CalloutArrow width="30" height="30" viewBox="0 0 30 30">
        <path d="m10 10 18 18" stroke="#f00" strokeWidth="2.500" />
        <path d="M1 0 14 7 7 14z" fill="#f00" />
      </CalloutArrow>
    </ToolDock>

    <Main>
      <Panel>
        <PanelTitle><h2>Estrutura do Relatório</h2><button aria-label="Fechar painel"><Close /></button></PanelTitle>
        <Pane $h={223}>
          <TreeList $pad={0}>
            <RootItem>
              <button aria-label="Recolher"><svg width="7" height="7"><path d="M6 0v6H0z" fill="#333" /></svg></button>
              <Node $selected $gap={4}><Icon name="band" />Detalhe</Node>
            </RootItem>
            {treeNodes.map(n => (
              <TreeItem key={n}>
                <Spacer $size={50} />
                <Branch />
                <Node $gap={3}><Icon name={nodeIcon(n)} />{n}</Node>
              </TreeItem>
            ))}
          </TreeList>
          <ScrollBar size={16} before={5} />
        </Pane>
        <PanelTitle $second><h2>Propriedades de Detail</h2></PanelTitle>
        <Pane>
          <ListArea>
            <PropTable>
              <colgroup><col style={{ width: 17 }} /><col style={{ width: 104 }} /><col /></colgroup>
              {groups.map(([title, props]) => (
                <tbody key={title}>
                  <tr><GroupCell colSpan={3}><span><Expander $open aria-label={title} />{title}</span></GroupCell></tr>
                  {props.map(([name, value, expand], i) => {
                    const last = i === props.length - 1;
                    return (
                      <tr key={name}>
                        <Gutter />
                        <NameCell $last={last} $expand={expand}>
                          <span>{expand && <Expander aria-label={name} />}{name}</span>
                        </NameCell>
                        <ValueCell $last={last}>
                          {typeof value === 'boolean'
                            ? <Check type="checkbox" aria-label={name} defaultChecked={value} />
                            : value}
                        </ValueCell>
                      </tr>
                    );
                  })}
                </tbody>
              ))}
            </PropTable>
          </ListArea>
        </Pane>
      </Panel>

      <Designer>
        <RulerRow>
          <svg width="13" height="14" viewBox="0 0 13 14">
            <rect x=".5" y=".5" width="12" height="13" fill="#fff" stroke="#1d3f6e" /><rect x="1" y="1" width="11" height="3" fill="#2c5c94" />
            <path d="M4.500 4v9M2 6.500h1M2 8.500h1M2 10.500h1M6 6.500h5M6 8.500h5M6 10.500h5" stroke="#2f6cb8" />
          </svg>
          <TopRuler />
        </RulerRow>
        <Surface>
          <SideRuler><LeftRuler /></SideRuler>
          <Paper>
            <BandTitle>
              <svg width="8" height="5"><path d="M.5 4.500 4 1l3.500 3.500" fill="none" stroke="#222" /></svg>
              Título
            </BandTitle>
            <Report />
          </Paper>
          <Backdrop />
          <ScrollBar size={232} before={1} grip />
        </Surface>
      </Designer>

      <Panel>
        <PanelTitle><h2>Estrutura de Dados</h2><button aria-label="Fechar painel"><Close /></button></PanelTitle>
        <Pane $h={73}>
          <TreeList $pad={11}>
            {dataSets.map((n, i) => (
              <TreeItem key={n}>
                <Branch $first={i === 0} />
                <Node $gap={4} $selected={i === 0}><Icon name="table" />{n}</Node>
              </TreeItem>
            ))}
          </TreeList>
          <ScrollBar size={22} before={2} grip />
        </Pane>
        <PanelTitle $second><h2>Campos para BDEBoleta</h2></PanelTitle>
        <Pane>
          <ListArea>
            <FieldTable>
              <colgroup><col style={{ width: 129 }} /><col /></colgroup>
              <thead><tr><th>Nome</th><th>Tipo</th></tr></thead>
              <tbody>
                {dbFields.map(([name, type], i) => (
                  <tr key={name}>
                    <td><NameChip $selected={i === 0}><Icon name="field" />{name}</NameChip></td>
                    <td>{type}</td>
                  </tr>
                ))}
              </tbody>
            </FieldTable>
          </ListArea>
          <ScrollBar size={59} before={1} grip />
        </Pane>
        <ScrollBar row size={83} before={2} grip />
        <BottomTabs>
          <BottomTab $active>Dados</BottomTab>
          <BottomTab>Layout</BottomTab>
          <TabEnd />
        </BottomTabs>
      </Panel>
    </Main>

    <StatusBar>
      Pronto.
      <Spacer />
      <StatusCell $w={90}>Esquerda: 0</StatusCell>
      <StatusCell $w={90}>Topo: 0</StatusCell>
      <StatusCell $w={90}>Largura: 0</StatusCell>
      <StatusCell $w={114}>Altura: 0</StatusCell>
    </StatusBar>
  </Window>
);

export default App;
